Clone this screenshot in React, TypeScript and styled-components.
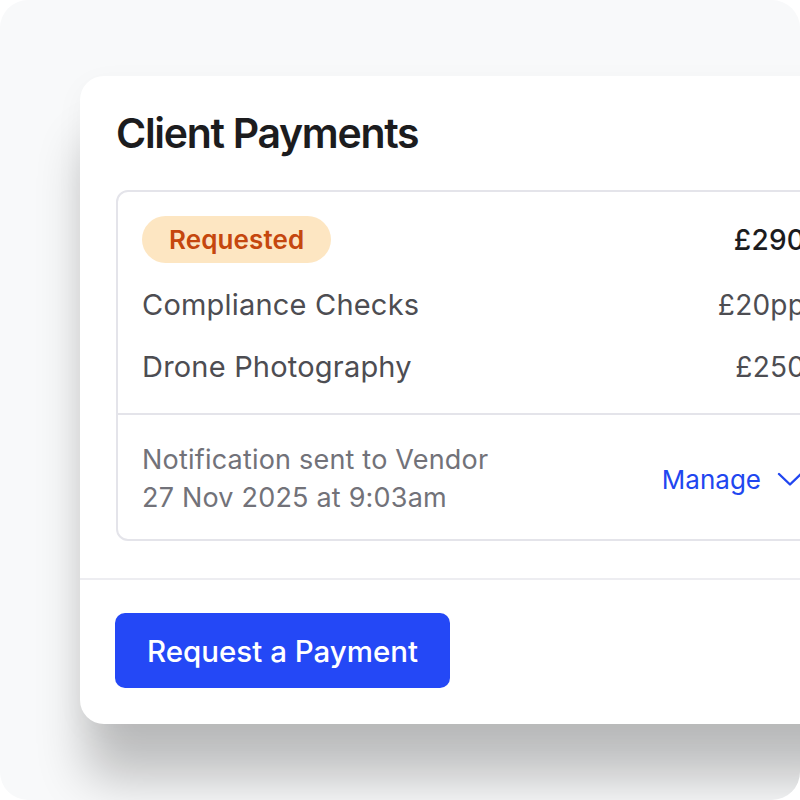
import styled, { createGlobalStyle } from 'styled-components';

const GlobalStyle = createGlobalStyle`
  html, body {
    margin: 0;
    padding: 0;
    background: #ffffff;
  }
  body {
    font-family: Inter, "Noto Sans", "Liberation Sans", sans-serif;
    -webkit-font-smoothing: antialiased;
  }
`;

const Frame = styled.div`
  width: 800px;
  height: 800px;
  box-sizing: border-box;
  background: #f8f9fa;
  border-radius: 28px;
  overflow: hidden;
  padding: 76px 0 0 80px;
`;

const Card = styled.section`
  width: 787px;
  background: #ffffff;
  border-radius: 24px;
  box-shadow: 0 60px 50px -6px rgba(0, 0, 0, 0.24), 0 8px 30px rgba(0, 0, 0, 0.04);
`;

const Header = styled.div`
  padding: 33px 36px 0 36px;
`;

const Title = styled.h1`
  margin: 0;
  font-size: 41px;
  line-height: 49px;
  font-weight: 600;
  letter-spacing: -1.3px;
  color: #1c1c1e;
`;

const Body = styled.div`
  padding: 32px 36px 37px 36px;
  border-bottom: 2px solid #ededf1;
`;

const PaymentBox = styled.div`
  border: 2px solid #e4e4ea;
  border-radius: 12px;
`;

const Lines = styled.div`
  display: flex;
  flex-direction: column;
  gap: 22px;
  padding: 24px 24px 26px 24px;
  border-bottom: 2px solid #e4e4ea;
`;

const Row = styled.div`
  display: flex;
  align-items: center;
  justify-content: space-between;
  min-height: 40px;
`;

const Badge = styled.span`
  display: inline-flex;
  align-items: center;
  height: 47px;
  padding: 0 27px;
  border-radius: 24px;
  background: #fde6c2;
  color: #c5470e;
  font-size: 26px;
  font-weight: 600;
  letter-spacing: 0.1px;
`;

const Amount = styled.span<{ $strong?: boolean }>`
  font-size: 28px;
  line-height: 40px;
  letter-spacing: 0.2px;
  font-weight: ${(p) => (p.$strong ? 500 : 400)};
  color: ${(p) => (p.$strong ? '#1c1c1e' : '#4d4d52')};
`;

const Label = styled.span`
  font-size: 29px;
  line-height: 40px;
  letter-spacing: 0.2px;
  color: #4d4d52;
`;

const Footer = styled.div`
  display: flex;
  align-items: center;
  justify-content: space-between;
  padding: 26px 24px 22px 24px;
`;

const Note = styled.div`
  font-size: 27px;
  line-height: 38px;
  letter-spacing: 0.2px;
  color: #727279;
`;

const Manage = styled.button`
  display: flex;
  align-items: center;
  gap: 16px;
  margin-right: 2px;
  border: 0;
  background: none;
  padding: 0;
  font-family: inherit;
  font-size: 26px;
  color: #2146f0;
  cursor: pointer;
`;

const Actions = styled.div`
  padding: 33px 35px 36px 35px;
`;

const PrimaryButton = styled.button`
  height: 75px;
  padding: 0 32px;
  border: 0;
  border-radius: 10px;
  background: #2448f6;
  color: #ffffff;
  font-family: inherit;
  font-size: 29.5px;
  font-weight: 500;
  cursor: pointer;
`;

const lines = [
  { label: 'Compliance Checks', amount: '£20pp' },
  { label: 'Drone Photography', amount: '£250' },
];

export default function App() {
  return (
    <>
      <GlobalStyle />
      <Frame>
        <Card>
          <Header>
            <Title>Client Payments</Title>
          </Header>
          <Body>
            <PaymentBox>
              <Lines>
                <Row>
                  <Badge>Requested</Badge>
                  <Amount $strong>£290</Amount>
                </Row>
                {lines.map((l) => (
                  <Row key={l.label}>
                    <Label>{l.label}</Label>
                    <Amount>{l.amount}</Amount>
                  </Row>
                ))}
              </Lines>
              <Footer>
                <Note>
                  Notification sent to Vendor
                  <br />
                  27 Nov 2025 at 9:03am
                </Note>
                <Manage>
                  Manage
                  <svg width="26" height="15" viewBox="0 0 26 15" fill="none">
                    <path d="M2 2 L13 12.5 L24 2" stroke="currentColor" strokeWidth="2.4" strokeLinecap="round" strokeLinejoin="round" />
                  </svg>
                </Manage>
              </Footer>
            </PaymentBox>
          </Body>
          <Actions>
            <PrimaryButton>Request a Payment</PrimaryButton>
          </Actions>
        </Card>
      </Frame>
    </>
  );
}
